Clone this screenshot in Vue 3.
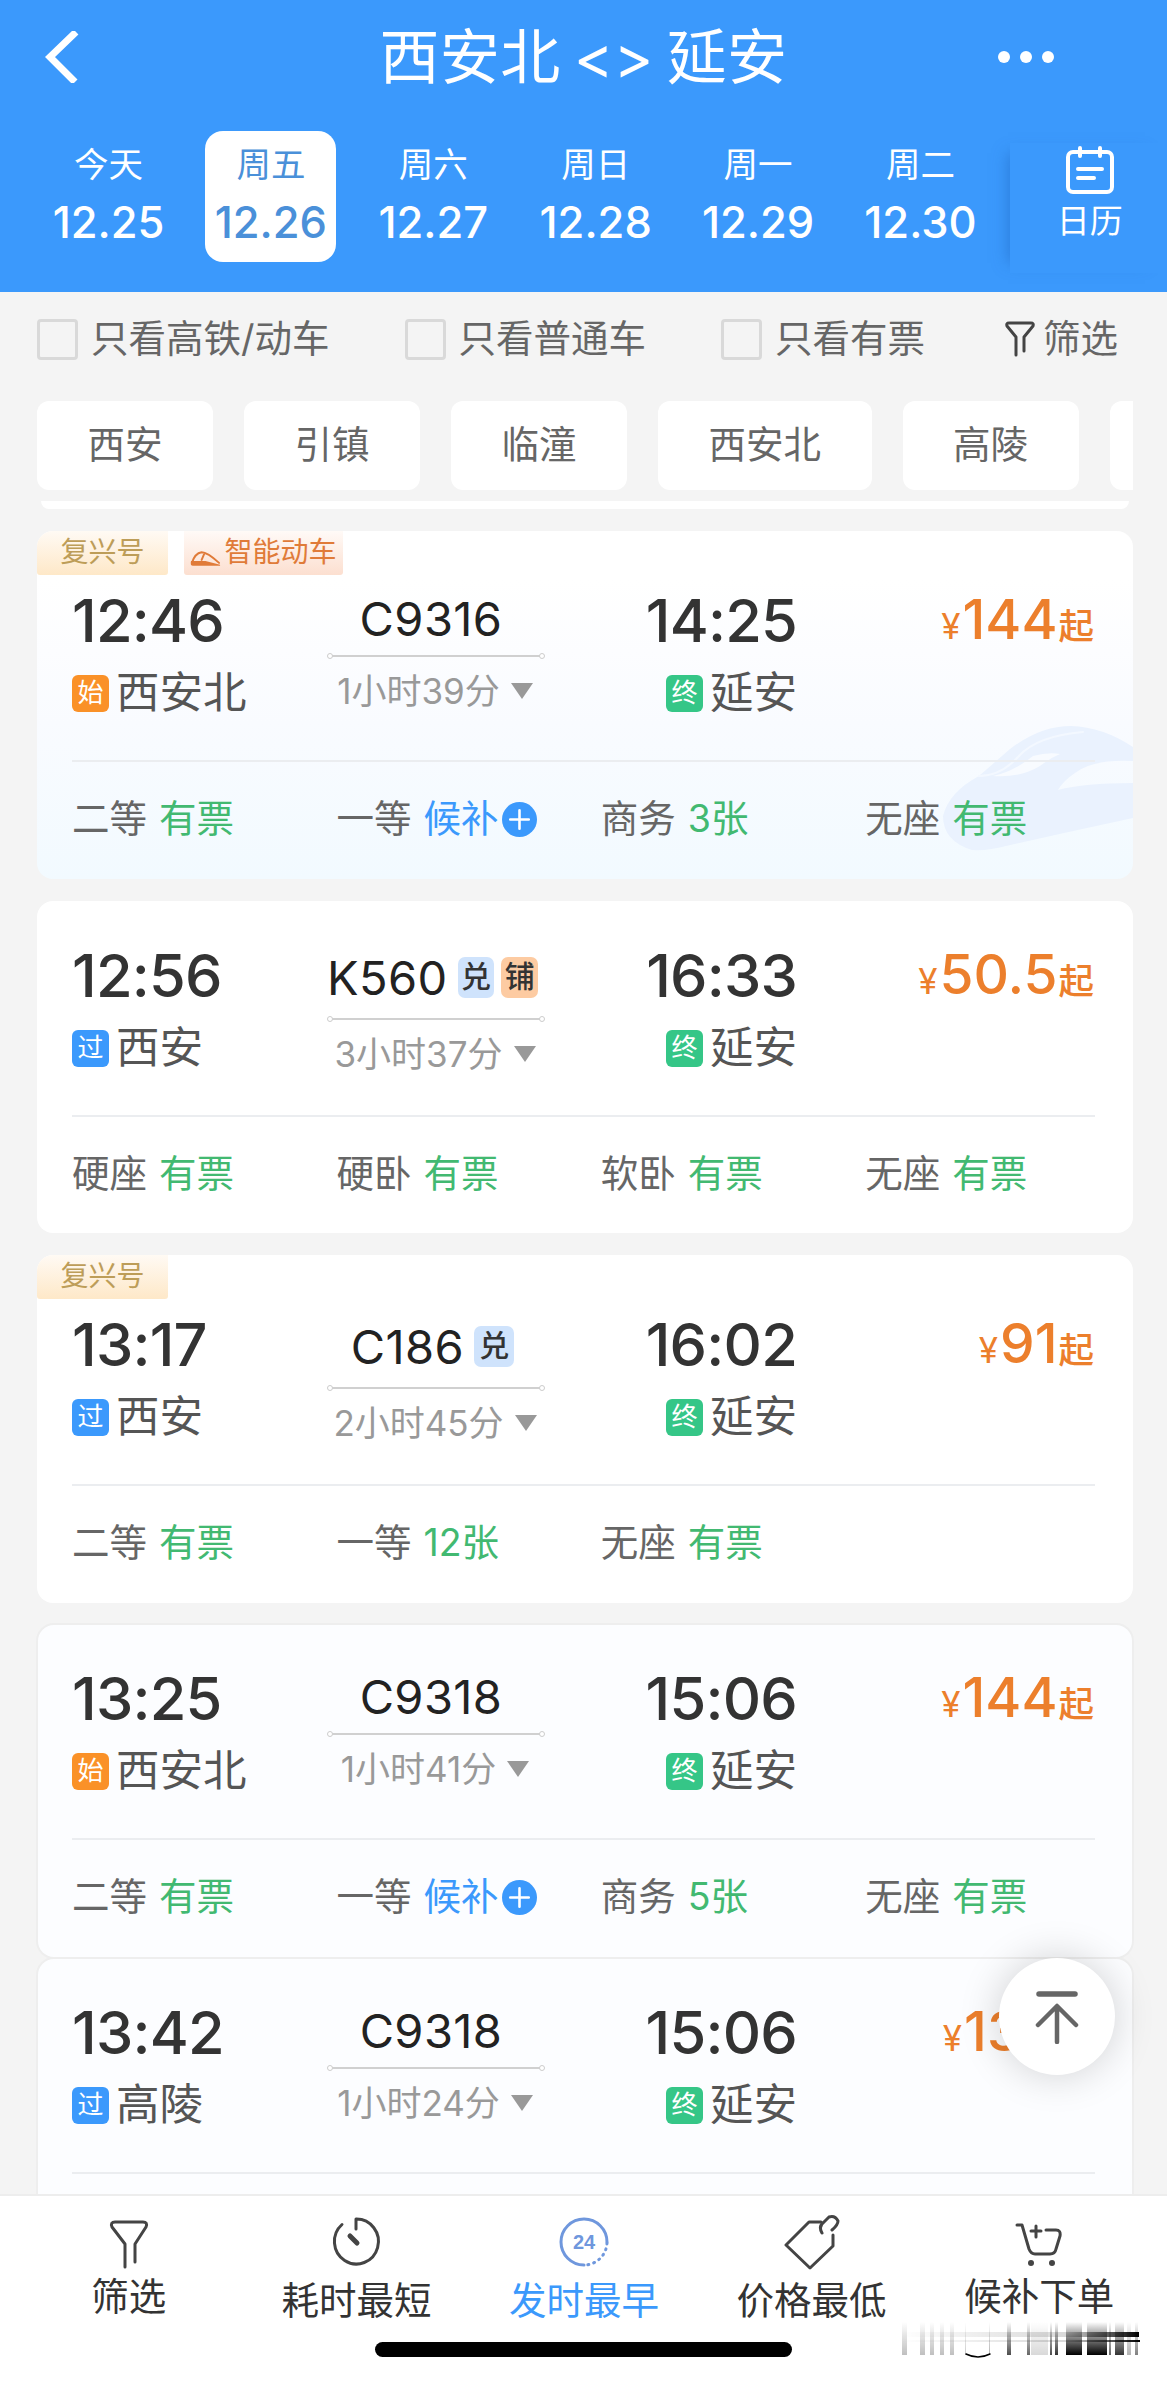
<template>
  <div class="page">
    <header class="header">
      <div class="nav">
        <svg class="back" viewBox="0 0 36 52">
          <path d="M32 1 6 26l25 25" />
        </svg>
        <h1 class="title">西安北 &lt;&gt; 延安</h1>
        <div class="more"><i></i><i></i><i></i></div>
      </div>
      <div class="dates">
        <a v-for="item in dates" :key="item.date" class="date" :class="{ active: item.date === activeDate }" @click="activeDate = item.date">
          <span class="week">{{ item.week }}</span>
          <span class="day">{{ item.date }}</span>
        </a>
        <a class="calendar">
          <svg viewBox="0 0 48 48">
            <rect x="2" y="6" width="44" height="40" rx="5" />
            <path d="M14 2v8M34 2v8M12 23h24M12 32h16" />
          </svg>
          <span>日历</span>
        </a>
      </div>
    </header>

    <div class="filters">
      <label v-for="item in filters" :key="item" class="filter">
        <i class="box"></i>{{ item }}
      </label>
      <a class="filter-more">
        <svg viewBox="0 0 30 36">
          <path d="M11 34V16L2 5Q1 2 4 2h22q3 0 2 3l-9 11v14" />
        </svg>
        筛选
      </a>
    </div>

    <div class="chips">
      <a v-for="item in stations" :key="item" class="chip">{{ item }}</a>
    </div>

    <main class="list">
      <div class="card-end"></div>
      <section v-for="(train, index) in trains" :key="index" class="card" :class="[train.theme, { tagged: train.tags }]">
        <svg v-if="train.theme === 'smart'" class="train-bg" viewBox="0 0 190 126">
          <path class="body" d="M29 124Q0 115 0 90 6 66 36 50L67 23Q97 0 128 0q32 1 62 21v14q-40-2-58 12-12 8-17 17 26-7 75-7v35l-69 15-58 13q-18 5-34 4z" />
          <path class="glass" d="M50 50q20-4 40-20 15-4 27-2-10 4-20 12-20 12-47 10z" />
          <path class="edge" d="M36 50q22 0 40-20T140 6" />
        </svg>
        <div v-if="train.tags" class="tags">
          <span class="tag">复兴号</span>
          <span v-if="train.theme === 'smart'" class="tag smart-tag">
            <svg viewBox="0 0 32 16">
              <path class="line" d="M2 12Q5 2 12 1q6 0 18 11M15 2l-3 7" />
              <path class="fill" d="M1 10h15l15 4v1H3q-3 0-2-5z" />
            </svg>智能动车
          </span>
        </div>
        <div class="info">
          <div class="place">
            <div class="time">{{ train.start }}</div>
            <div class="station"><i :class="train.fromType === '始' ? 'first' : 'pass'">{{ train.fromType }}</i>{{ train.from }}</div>
          </div>
          <div class="middle">
            <div class="number" :class="{ tall: train.marks }">
              <span>{{ train.number }}</span>
              <i v-for="mark in train.marks" :key="mark" :class="{ bed: mark === '铺' }">{{ mark }}</i>
            </div>
            <div class="route"></div>
            <div class="duration">{{ train.duration }}<i></i></div>
          </div>
          <div class="place arrive">
            <div class="time">{{ train.end }}</div>
            <div class="station"><i class="last">终</i>延安</div>
          </div>
          <div class="price"><small>¥</small><b>{{ train.price }}</b><em>起</em></div>
        </div>
        <div class="seats">
          <div v-for="seat in train.seats" :key="seat[0]" class="seat">
            {{ seat[0] }}
            <span :class="{ wait: seat[1] === '候补' }">{{ seat[1] }}</span>
            <svg v-if="seat[1] === '候补'" viewBox="0 0 34 34">
              <circle cx="17" cy="17" r="17" />
              <path d="M8 17h18M17 8v18" />
            </svg>
          </div>
        </div>
      </section>
    </main>

    <a class="to-top">
      <svg viewBox="0 0 44 54">
        <path class="bar" d="M4 4h36" />
        <path d="M22 17v35M3 35l19-19 19 19" />
      </svg>
    </a>

    <footer class="footer">
      <nav class="tabs">
        <a class="tab high">
          <svg viewBox="0 0 56 56">
            <path d="M24 53V30L11 13q-2-5 3-5h28q5 0 3 5L34 30v18" />
          </svg>
          筛选
        </a>
        <a class="tab">
          <svg viewBox="0 0 56 56">
            <path d="M28 15V5a22 22.5 0 1 1-14 5.500" />
            <path class="hand" d="m22 22 7 7" />
          </svg>
          耗时最短
        </a>
        <a class="tab on">
          <svg viewBox="0 0 56 56">
            <path d="M51 28A23 23 0 1 0 28 51" />
            <path class="dots" d="M51 29A23 23 0 0 1 28 51" />
            <text x="28" y="35">24</text>
          </svg>
          发时最早
        </a>
        <a class="tab">
          <svg viewBox="0 0 56 56">
            <path d="M37 8H25L2 31l24 23 23-22V21" />
            <path d="M38 19q-4-7 2-11l5-5q6-2 9 4 0 4-6 9" />
          </svg>
          价格最低
        </a>
        <a class="tab high">
          <svg viewBox="0 0 56 56">
            <path d="M6 11h5l7 24q2 5 6 5h15q5 0 6-5l4-13q1-6-4-6H35M20 17h10M25 12v11" />
            <circle cx="20" cy="49" r="3" /><circle cx="41" cy="49" r="3" />
          </svg>
          候补下单
        </a>
      </nav>
      <div class="indicator"></div>
      <svg class="streaks" viewBox="0 0 240 36">
        <defs>
          <linearGradient id="streak" x1="0" y1="0" x2="0" y2="1">
            <stop offset="0" stop-color="#000" stop-opacity="0" />
            <stop offset="1" stop-color="#000" />
          </linearGradient>
          <linearGradient id="sweep">
            <stop offset="0" stop-color="#000" stop-opacity="0" />
            <stop offset="0.700" stop-color="#000" stop-opacity="0.150" />
            <stop offset="1" stop-color="#000" />
          </linearGradient>
        </defs>
        <rect v-for="bar in streaks" :key="bar[0]" :x="bar[0]" y="0" :width="bar[1]" height="33" :opacity="bar[2]" fill="url(#streak)" />
        <rect x="0" y="10" width="239" height="5" fill="url(#sweep)" />
        <rect x="0" y="18" width="240" height="2" fill="url(#sweep)" />
        <path d="M66 32q12 6 24 0" />
      </svg>
    </footer>
  </div>
</template>

<script setup>
import { ref } from 'vue'

const activeDate = ref('12.26')
const dates = [
  { week: '今天', date: '12.25' },
  { week: '周五', date: '12.26' },
  { week: '周六', date: '12.27' },
  { week: '周日', date: '12.28' },
  { week: '周一', date: '12.29' },
  { week: '周二', date: '12.30' }
]
const filters = ['只看高铁/动车', '只看普通车', '只看有票']
const stations = ['西安', '引镇', '临潼', '西安北', '高陵', '']

const trains = [
  {
    theme: 'smart', tags: true, number: 'C9316', start: '12:46', end: '14:25', from: '西安北', fromType: '始',
    duration: '1小时39分', price: '144',
    seats: [['二等', '有票'], ['一等', '候补'], ['商务', '3张'], ['无座', '有票']]
  },
  {
    number: 'K560', marks: ['兑', '铺'], start: '12:56', end: '16:33', from: '西安', fromType: '过',
    duration: '3小时37分', price: '50.5',
    seats: [['硬座', '有票'], ['硬卧', '有票'], ['软卧', '有票'], ['无座', '有票']]
  },
  {
    tags: true, number: 'C186', marks: ['兑'], start: '13:17', end: '16:02', from: '西安', fromType: '过',
    duration: '2小时45分', price: '91',
    seats: [['二等', '有票'], ['一等', '12张'], ['无座', '有票']]
  },
  {
    theme: 'group', number: 'C9318', start: '13:25', end: '15:06', from: '西安北', fromType: '始',
    duration: '1小时41分', price: '144',
    seats: [['二等', '有票'], ['一等', '候补'], ['商务', '5张'], ['无座', '有票']]
  },
  {
    theme: 'group', number: 'C9318', start: '13:42', end: '15:06', from: '高陵', fromType: '过',
    duration: '1小时24分', price: '134',
    seats: []
  }
]

// x, width, opacity
const streaks = [
  [2, 5, 0.25], [20, 5, 0.25], [30, 4, 0.25], [40, 4, 0.25], [50, 4, 0.25], [65, 1, 0.2], [89, 1, 0.3],
  [107, 4, 0.7], [127, 3, 0.6], [131, 17, 0.15], [150, 2, 0.7], [155, 3, 0.8],
  [166, 16, 1], [187, 20, 1], [209, 2, 0.6], [215, 9, 0.8], [227, 4, 0.3], [235, 3, 0.5]
]
</script>

<style>
body {
  background: #f4f4f4;
}
</style>

<style scoped>
.page {
  position: relative;
  display: flex;
  flex-direction: column;
  width: 1167px;
  height: 2381px;
  overflow: hidden;
  background: #f4f4f4;
  color: #666;
  font-family: Inter, "Noto Sans CJK SC", sans-serif;
  font-size: 37.5px;
  line-height: 1;
}
i,
em {
  font-style: normal;
}
svg {
  display: block;
  fill: none;
  stroke-linecap: round;
  stroke-linejoin: round;
}
.header {
  flex: none;
  height: 292px;
  background: #3b99fc;
  color: #fff;
}
.nav {
  display: grid;
  grid-template-columns: 300px 1fr 300px;
  align-items: center;
  height: 113px;
}
.back {
  width: 36px;
  height: 52px;
  margin-left: 44px;
  stroke: #fff;
  stroke-width: 7;
  stroke-linecap: butt;
  stroke-linejoin: miter;
}
.title {
  margin: 0;
  font-size: 60px;
  font-weight: 400;
  letter-spacing: 0.3px;
  word-spacing: -4px;
  text-align: center;
  white-space: nowrap;
}
.more {
  display: flex;
  gap: 10px;
  justify-content: flex-end;
  margin-right: 113px;
}
.more i {
  width: 12px;
  height: 12px;
  border-radius: 50%;
  background: #fff;
}
.dates {
  display: flex;
  height: 131px;
  margin-top: 18px;
  padding-left: 43px;
  gap: 31.4px;
}
.date {
  display: flex;
  flex: none;
  flex-direction: column;
  align-items: center;
  width: 131px;
  border-radius: 18px;
}
.date.active {
  background: #fff;
  color: #4a90d9;
}
.week {
  height: 58px;
  padding-top: 1px;
  font-size: 34.5px;
  line-height: 66px;
}
.day {
  font-size: 43.5px;
  font-weight: 500;
  line-height: 64px;
}
.calendar {
  display: flex;
  flex: 1;
  flex-direction: column;
  align-items: center;
  margin: 12px 0 -11px -7px;
  padding-top: 3px;
  padding-left: 2px;
  box-shadow: -12px 0 14px -10px rgba(30, 100, 190, 0.5);
  font-size: 33px;
}
.calendar svg {
  width: 48px;
  height: 48px;
  margin-bottom: 11px;
  stroke: #fff;
  stroke-width: 4;
}
.filters {
  display: flex;
  flex: none;
  align-items: center;
  height: 94px;
  padding-left: 37px;
}
.filter {
  display: flex;
  align-items: center;
  margin-right: 75px;
}
.box {
  box-sizing: border-box;
  width: 41px;
  height: 41px;
  margin-right: 13px;
  border: 3px solid #d9d9d9;
  border-radius: 4px;
}
.filter-more {
  display: flex;
  gap: 8px;
  align-items: center;
  margin-left: 5px;
}
.filter-more svg {
  width: 30px;
  height: 36px;
  stroke: #444;
  stroke-width: 3;
}
.chips {
  display: flex;
  flex: none;
  gap: 31px;
  height: 89px;
  margin: 15px 34px 11px 37px;
  overflow: hidden;
}
.chip {
  flex: none;
  box-sizing: border-box;
  height: 89px;
  min-width: 100px;
  padding: 0 50.5px;
  border-radius: 12px;
  background: #fff;
  line-height: 87px;
}
.list {
  display: flex;
  flex: 1;
  flex-direction: column;
  gap: 22px;
  min-height: 0;
  padding: 0 34px 0 37px;
  overflow: hidden;
}
.card-end {
  flex: none;
  height: 8px;
  margin: 0 4px;
  border-radius: 0 0 16px 16px;
  background: #fff;
}
.card {
  position: relative;
  flex: none;
  height: 332px;
  overflow: hidden;
  border-radius: 16px;
  background: #fff;
}
.card.tagged {
  height: 348px;
}
.card.smart {
  background: linear-gradient(#fff 14%, #f9fbff 55%, #f2faff);
}
.card.group {
  margin: 0 1px;
  background: #fcfdff;
  box-shadow: 0 0 0 2px #eee;
}
.group + .group {
  margin-top: -20px;
}
.train-bg {
  position: absolute;
  right: 0;
  bottom: 27px;
  width: 190px;
  height: 126px;
}
.train-bg .body {
  fill: #eaf2fe;
}
.train-bg .glass {
  fill: #f8fbff;
}
.train-bg .edge {
  stroke: #f3f8ff;
  stroke-width: 2;
}
.tags {
  display: flex;
  gap: 16px;
  height: 44px;
}
.tag {
  width: 131px;
  background: linear-gradient(#fffaf4, #fee8c8);
  border-radius: 0 0 3px 3px;
  color: #bd9d58;
  font-size: 28px;
  line-height: 42px;
  text-align: center;
}
.smart-tag {
  display: flex;
  justify-content: center;
  width: 159px;
  background: linear-gradient(#fffaf7, #fcdfd0);
  color: #e07b39;
}
.smart-tag svg {
  width: 31px;
  height: 16px;
  margin: 20px 3px 0 0;
}
.smart-tag .line {
  stroke: #e07b39;
  stroke-width: 2;
}
.smart-tag .fill {
  fill: #e07b39;
}
.info {
  position: relative;
  display: grid;
  grid-template-columns: 255px 218px 252px 1fr;
  box-sizing: border-box;
  height: 216px;
  margin: 0 38px 0 35px;
  padding-top: 44px;
  border-bottom: 2px solid #ebedf0;
}
.tagged .info {
  height: 187px;
  padding-top: 15px;
}
.group .info {
  height: 215px;
  margin: 0 37px 0 34px;
  padding-top: 43px;
}
.time {
  color: #333;
  font-size: 59.5px;
  font-weight: 450;
  letter-spacing: -0.8px;
  line-height: 60px;
}
.station {
  display: flex;
  align-items: center;
  height: 50px;
  margin-top: 18px;
  color: #555;
  font-size: 43.5px;
}
.station i {
  width: 37px;
  height: 37px;
  margin-right: 7px;
  border-radius: 6px;
  color: #fff;
  font-size: 26px;
  line-height: 36px;
  text-align: center;
}
.first {
  background: #fa9128;
}
.pass {
  background: #3b99fc;
}
.last {
  background: #35c687;
}
.arrive {
  display: flex;
  flex-direction: column;
  align-items: flex-end;
}
.middle {
  padding-top: 3px;
}
.number {
  display: flex;
  align-items: center;
  justify-content: center;
  height: 50px;
  padding-right: 7px;
  color: #222;
  font-size: 47px;
  letter-spacing: 0.4px;
}
.number.tall {
  height: 58px;
}
.number span {
  margin-right: 3px;
}
.number i {
  width: 40px;
  height: 41px;
  margin-left: 7px;
  border-radius: 7px;
  background: #cfe3fc;
  color: #333;
  font-size: 30px;
  font-weight: 500;
  line-height: 39px;
  letter-spacing: 0;
  text-align: center;
}
.number .bed {
  background: #fdcba2;
}
.route {
  position: relative;
  height: 2px;
  margin: 12px 3px 0;
  background: #d0d0d0;
}
.route::before,
.route::after {
  content: '';
  position: absolute;
  top: -2px;
  left: -3px;
  box-sizing: border-box;
  width: 6px;
  height: 6px;
  border: 1px solid #ccc;
  border-radius: 50%;
  background: #fff;
}
.route::after {
  right: -3px;
  left: auto;
}
.duration {
  display: flex;
  align-items: center;
  justify-content: center;
  height: 40px;
  margin-top: 14px;
  padding-right: 2px;
  color: #999;
  font-size: 35px;
  white-space: nowrap;
}
.duration i {
  margin-left: 11px;
  border: 11px solid transparent;
  border-top: 16px solid #999;
  border-bottom: 0;
}
.price {
  display: flex;
  align-items: baseline;
  justify-content: flex-end;
  height: 60px;
  margin-top: -1px;
  padding-right: 1px;
  color: #ec7f2c;
  line-height: 60px;
}
.price small {
  font-size: 35px;
}
.price b {
  margin: 0 1px 0 2px;
  font-size: 55px;
  font-weight: 500;
}
.price em {
  font-size: 35.5px;
  font-weight: 500;
}
.seats {
  position: relative;
  display: grid;
  grid-template-columns: repeat(4, 264.4px);
  height: 114px;
  margin-left: 35px;
}
.group .seats {
  margin-left: 34px;
}
.seat {
  display: flex;
  align-items: center;
}
.seat span {
  margin-left: 12px;
  color: #42b971;
}
.seat .wait {
  color: #3b99fc;
}
.seat svg {
  width: 35px;
  height: 35px;
  margin-left: 4px;
  fill: #3b99fc;
  stroke: none;
}
.seat svg path {
  stroke: #fff;
  stroke-width: 2.5;
}
.to-top {
  position: absolute;
  top: 1958px;
  left: 999px;
  display: grid;
  place-items: center;
  width: 116px;
  height: 117px;
  border-radius: 50%;
  background: #fff;
  box-shadow: 0 0 40px rgba(0, 0, 0, 0.18);
}
.to-top svg {
  width: 44px;
  height: 54px;
  stroke: #666;
  stroke-width: 4.5;
}
.to-top .bar {
  stroke-width: 5.5;
}
.footer {
  position: relative;
  flex: none;
  box-sizing: border-box;
  height: 187px;
  border-top: 2px solid #ededed;
  background: #fff;
}
.tabs {
  display: flex;
  height: 146px;
  padding: 0 14px 0 15px;
}
.tab {
  display: flex;
  flex: 1;
  flex-direction: column;
  align-items: center;
  padding-top: 18px;
  color: #333;
}
.tab svg {
  width: 56px;
  height: 56px;
  margin-bottom: 12px;
  stroke: #444;
  stroke-width: 3;
}
.tab.high svg {
  margin-bottom: 8px;
}
.tab circle {
  fill: #444;
  stroke: none;
}
.tab .hand {
  stroke-width: 5;
}
.tab.on {
  color: #3b99fc;
}
.tab.on svg {
  stroke: #6f97dd;
}
.tab .dots {
  stroke-dasharray: 1 5;
}
.tab text {
  fill: #6f97dd;
  stroke: none;
  font-family: "Liberation Sans", sans-serif;
  font-size: 20px;
  font-weight: 700;
  text-anchor: middle;
}
.indicator {
  width: 417px;
  height: 15px;
  margin: 0 auto;
  border-radius: 8px;
  background: #000;
}
.streaks {
  position: absolute;
  right: 27px;
  bottom: 23px;
  width: 240px;
  height: 36px;
}
.streaks path {
  stroke: #000;
  stroke-width: 1.5;
}
</style>
